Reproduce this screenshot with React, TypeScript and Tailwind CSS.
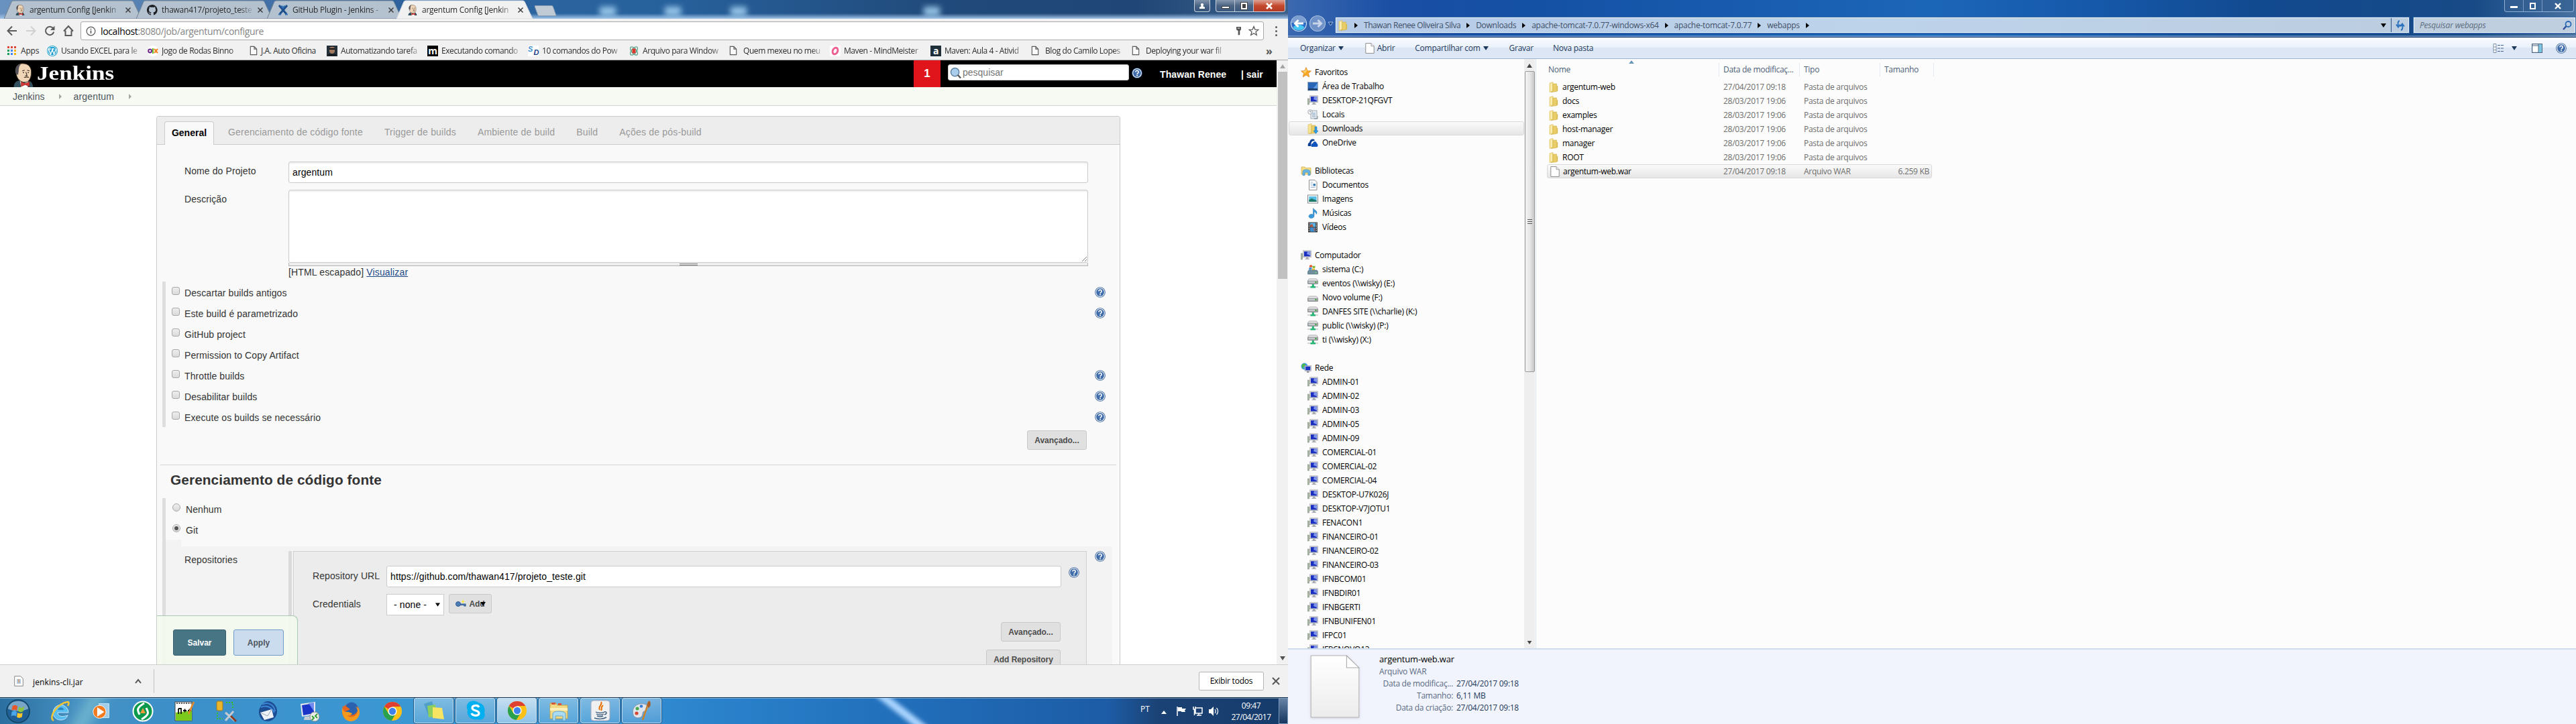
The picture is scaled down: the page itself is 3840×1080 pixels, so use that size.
import React from "react";

type Kids = { children?: React.ReactNode };

/* ---------- small shared drawings ---------- */

const Help = ({ className = "" }: { className?: string }) => (
  <svg viewBox="0 0 16 16" className={"size-4 shrink-0 " + className}>
    <circle cx="8" cy="8" r="7.8" fill="#2f5a97" />
    <circle cx="8" cy="8" r="6.9" fill="#fff" />
    <circle cx="8" cy="8" r="5.9" fill="#3f6cab" />
    <path d="M5.9 6.4a2.1 2.1 0 1 1 3.3 1.7c-.8.5-1.1.8-1.1 1.6" fill="none" stroke="#fff" strokeWidth="1.6" />
    <rect x="7.2" y="10.7" width="1.8" height="1.7" fill="#fff" />
  </svg>
);

const Butler = ({ className = "" }: { className?: string }) => (
  <svg viewBox="0 0 32 40" className={className}>
    <path d="M0 40c0-7 4-10 9-11l14 0c6 1 8 5 9 11z" fill="#33515f" />
    <path d="M10 28l6 8 8-8-1 12H12z" fill="#fff" />
    <path d="M3 15C2 5 9 0 16 1c8 0 13 6 13 14 0 10-4 17-11 17S5 26 4 18z" fill="#f0d6b7" stroke="#3b2a20" strokeWidth="1" />
    <path d="M3 17C1 8 5 2 12 2c-3 2-4 6-4 11l-1 7z" fill="#57525a" />
    <path d="M14 13l4-1M22 12l4 1M15 16h2M23 16h2M20 15l2 6h-3M17 24c3-1 6-1 8 0" fill="none" stroke="#3b2a20" strokeWidth="1.2" />
    <path d="M12 31l7 3 7-3v8l-7-3-7 3z" fill="#d33833" stroke="#7b1714" strokeWidth=".6" />
  </svg>
);

const Page = ({ className = "" }: { className?: string }) => (
  <svg viewBox="0 0 12 16" className={"h-[15px] w-3 shrink-0 " + className}>
    <path d="M1 1.5h6l4 4v9H1zM7 1.5v4h4" fill="#fafafa" stroke="#5a5a5a" strokeWidth="1.2" />
  </svg>
);

const Folder = ({ className = "" }: { className?: string }) => (
  <svg viewBox="0 0 16 16" className={"size-4 shrink-0 " + className}>
    <path d="M2 2l5-1.5V14l-5 1.5z" fill="#f6e396" stroke="#d8b84c" strokeWidth=".6" />
    <path d="M7 3h5.5v11.5L4 15.5 7 14z" fill="#e9cd69" stroke="#cfae45" strokeWidth=".6" />
    <path d="M12.5 6h1.7v8h-1.7z" fill="#d9bc55" />
    <path d="M4.5 2.5v11" stroke="#fdf3c4" strokeWidth="1.2" />
  </svg>
);

const Sheet = ({ className = "" }: { className?: string }) => (
  <svg viewBox="0 0 14 16" className={"h-4 w-3.5 shrink-0 " + className}>
    <path d="M.8.6H9l4.2 4.2v10.6H.8z" fill="#fff" stroke="#8c8c8c" strokeWidth="1" />
    <path d="M9 .6v4.2h4.2" fill="#eee" stroke="#8c8c8c" strokeWidth=".8" />
  </svg>
);

const Pc = () => (
  <svg viewBox="0 0 16 16" className="size-4 shrink-0">
    <rect x="0.3" y="5" width="2.4" height="9" fill="#a9b7a4" stroke="#7e8a7b" strokeWidth=".5" />
    <rect x="3.6" y=".8" width="12" height="10" fill="#c9ccd0" stroke="#9a9da1" strokeWidth=".5" />
    <rect x="5" y="2.2" width="9.2" height="7.2" fill="#1a2fc0" />
    <path d="M10 2.2h4.2v6L9 6z" fill="#7f95ea" />
    <path d="M8 11h3.4v1.8H13V14H6.5v-1.2H8z" fill="#a8abb0" />
  </svg>
);

const Drive = ({ net }: { net?: boolean }) => (
  <svg viewBox="0 0 16 16" className="size-4 shrink-0">
    <g transform={net ? "translate(0 0)" : "translate(0 5)"}>
      <path d="M2.5 1h11l2 2.5v5h-15v-5z" fill="#f1f1f1" stroke="#8e9194" strokeWidth=".8" />
      <rect x=".8" y="4" width="14.4" height="4" rx="1" fill="#c5c8cb" stroke="#75787b" strokeWidth=".8" />
      <rect x="11.5" y="5" width="2" height="2" fill="#2fa02a" />
    </g>
    {net && <path d="M0 13h16" stroke="#a9b0ad" />}
    {net && <path d="M6.800 9h3v3H12v2.500H4.500V12h2.300z" fill="#22b573" />}
  </svg>
);

const SysDrive = () => (
  <svg viewBox="0 0 16 16" className="size-4 shrink-0">
    <path d="M3 2c1.500-1 3-1 4 0v3C6 4 4.500 4 3 5z" fill="#e5542b" />
    <path d="M7.500 2.300c1.500 1 3 1 4 0v3c-1 1-2.500 1-4 0z" fill="#7cb82f" />
    <path d="M2.500 5.500c1.500-1 3-1 4 0v3H2z" fill="#3f8fd8" />
    <path d="M7 6c1.500 1 3 1 4 0v3H7z" fill="#f2c02e" />
    <path d="M2 9h12l1.500 2v4H.500v-4z" fill="#6f8f9f" stroke="#4a6674" strokeWidth=".6" />
    <rect x="11.500" y="12" width="2" height="1.500" fill="#7be06a" />
  </svg>
);

const Star = () => (
  <svg viewBox="0 0 16 16" className="size-4 shrink-0">
    <path d="M8 .5l2.200 5 5.300.4-4 3.600 1.300 5.500L8 12l-4.800 3 1.300-5.500-4-3.600 5.300-.4z" fill="#f9a825" stroke="#d9822b" strokeWidth=".7" />
    <path d="M8 2.500l1 3.500-3 3-3-2.500L6.500 6z" fill="#fcd873" />
  </svg>
);

const DesktopIcon = () => (
  <svg viewBox="0 0 16 16" className="size-4 shrink-0">
    <rect x=".500" y="1.500" width="15" height="12.500" fill="#2a66b8" stroke="#9aaabd" />
    <path d="M6 14L15 3v11z" fill="#5d9be0" />
    <rect x="1" y="11" width="14" height="2.500" fill="#1b3c66" />
  </svg>
);

const Recent = () => (
  <svg viewBox="0 0 16 16" className="size-4 shrink-0">
    <rect x="5" y="2" width="9" height="12" fill="#e8edf2" stroke="#8b97a3" strokeWidth=".8" />
    <path d="M7 6h5M7 8.500h5M7 11h5" stroke="#7aa0c4" />
    <circle cx="4" cy="4" r="3.300" fill="#f5f5f5" stroke="#8b97a3" strokeWidth=".8" />
    <path d="M4 2v2h1.500M10 14h5v-4" fill="none" stroke="#7b8894" />
  </svg>
);

const DownloadsIcon = () => (
  <svg viewBox="0 0 16 16" className="size-4 shrink-0">
    <path d="M1 2l5-1.500V14l-5 1.500z" fill="#f6e396" stroke="#d8b84c" strokeWidth=".6" />
    <path d="M6 3h6v11.500L3 15.500 6 14z" fill="#e9cd69" stroke="#cfae45" strokeWidth=".6" />
    <path d="M11 5h3v6h2l-3.500 4.500L9 11h2z" fill="#2f9be3" stroke="#1b6fae" strokeWidth=".5" />
  </svg>
);

const OneDrive = () => (
  <svg viewBox="0 0 16 16" className="size-4 shrink-0">
    <path d="M1 13C0 9 2 8 3 7.500 3.500 3 8 1 11 4l-1 1C6 5 5 8 5.500 13z" fill="#0a3f94" />
    <path d="M6 14c-1-3 0-5 2-5 1-4 5-4 6 0 2 1 2 5 0 5z" fill="#0f55bb" />
  </svg>
);

const Libraries = () => (
  <svg viewBox="0 0 16 16" className="size-4 shrink-0">
    <path d="M1 2h5l1 1.500h8V13H1z" fill="#f4dd86" stroke="#cfae45" strokeWidth=".7" />
    <path d="M3 14.500V9c0-2 2-3 5-3s6 1 6 3v5.500h-3V10H6v4.500z" fill="#6bb8e6" stroke="#3582b5" strokeWidth=".7" />
  </svg>
);

const DocIcon = () => (
  <svg viewBox="0 0 16 16" className="size-4 shrink-0">
    <path d="M2.500.6H11l3 3v11.800H2.500z" fill="#fff" stroke="#8a8f94" />
    <path d="M4.500 4h4M4.500 6.500h3M4.500 9h3M4.500 11.500h7" stroke="#9fb4c8" />
    <rect x="8.500" y="6" width="3.500" height="3.500" fill="#3b7fb8" />
  </svg>
);

const PictureIcon = () => (
  <svg viewBox="0 0 16 16" className="size-4 shrink-0">
    <rect x=".500" y="2" width="15" height="12" fill="#fff" stroke="#83898f" />
    <rect x="2.300" y="4" width="11.400" height="8" fill="#58bfe6" />
    <path d="M2.300 9l4-2 7.400 3v2H2.300z" fill="#1f7a6b" />
  </svg>
);

const MusicIcon = () => (
  <svg viewBox="0 0 16 16" className="size-4 shrink-0">
    <path d="M8.500.5c1 2.500 5 3 5.500 6 .2 2-1 3-1 3 .3-2-1-3-3-3.500V12c0 2-2 3.500-4.500 3.500S2 14 2 12.300 4 9.500 6 9.500c1 0 2 .3 2.500.7z" fill="#3a9bdc" stroke="#1f6fb0" strokeWidth=".5" />
  </svg>
);

const VideoIcon = () => (
  <svg viewBox="0 0 16 16" className="size-4 shrink-0">
    <rect x="1" y=".5" width="14" height="15" fill="#3a3a3a" />
    <rect x="4" y="1.500" width="8" height="6" fill="#5bb4e8" />
    <rect x="4" y="8.500" width="8" height="6" fill="#3e8ed0" />
    <path d="M4 5l3-2 2 4.500H4zM9 9l3 2-2 3z" fill="#b5523d" />
    <path d="M2.500 1.500v13M13.500 1.500v13" stroke="#e9e9e9" strokeWidth="1.200" strokeDasharray="1.300 1.300" />
  </svg>
);

const NetworkIcon = () => (
  <svg viewBox="0 0 16 16" className="size-4 shrink-0">
    <circle cx="5.500" cy="5.500" r="5" fill="#3aa0e0" />
    <path d="M2 3c2-2 5-2 5 0S4 5 3.500 8 1 6 2 3z" fill="#55b947" />
    <rect x="6" y="4.500" width="9.500" height="8" fill="#c5c9d2" stroke="#8d9199" strokeWidth=".5" />
    <rect x="7.200" y="5.700" width="7" height="5.500" fill="#1b33c4" />
    <path d="M9 12.500h3.500V15H9z" fill="#9498a0" />
  </svg>
);

const Tri = ({ className = "" }: { className?: string }) => (
  <svg viewBox="0 0 8 6" className={"h-1.5 w-2 shrink-0 " + className}>
    <path d="M0 0h8L4 6z" fill="currentColor" />
  </svg>
);

/* ---------- Chrome window ---------- */

const GitCat = () => (
  <svg viewBox="0 0 16 16" className="size-4 shrink-0">
    <path
      d="M8 0C3.580 0 0 3.580 0 8c0 3.540 2.290 6.530 5.470 7.590.4.070.55-.17.55-.38v-1.490c-2.230.48-2.700-1.070-2.700-1.070-.36-.92-.89-1.170-.89-1.170-.73-.5.060-.49.060-.49.8.060 1.230.83 1.230.83.71 1.220 1.870.87 2.330.66.070-.52.280-.87.510-1.070-1.780-.2-3.640-.89-3.640-3.950 0-.87.31-1.590.82-2.150-.08-.2-.36-1.020.08-2.120 0 0 .67-.21 2.200.82a7.600 7.600 0 0 1 4 0c1.530-1.040 2.200-.82 2.200-.82.44 1.100.16 1.920.08 2.120.51.56.82 1.270.82 2.150 0 3.070-1.870 3.750-3.650 3.950.29.25.54.73.54 1.480v2.200c0 .21.150.46.55.38A8 8 0 0 0 8 0z"
      fill="#1c1f24"
    />
  </svg>
);

const PluginX = () => (
  <svg viewBox="0 0 16 16" className="size-4 shrink-0">
    <path d="M2 1l11 13M14 1L3 14" stroke="#1d4f8c" strokeWidth="3" />
    <path d="M1 14.500h4M11 14.500h4M5.500 1.500l2.500 3 2.500-3" stroke="#2f6fb5" strokeWidth="2" fill="none" />
  </svg>
);

function ChromeTab({ icon, label, active, width }: { icon: React.ReactNode; label: string; active?: boolean; width: string }) {
  return (
    <div className={"relative -mr-[9px] flex h-7 shrink-0 items-center pt-0.5 pl-4 " + width + (active ? " z-10" : "")}>
      <svg viewBox="0 0 204 28" preserveAspectRatio="none" className="absolute inset-0 size-full">
        <path d="M0 28L11 2.500Q12 1 14 1H188Q190 1 191 2.500L203 28z" fill={active ? "#f1f1f1" : "#b4c1cf"} stroke={active ? "#cfd6de" : "#6f8194"} />
      </svg>
      <div className="relative flex items-center">
        {icon}
        <span className="ml-[6px] w-[137px] text-xs tracking-[-0.25px] whitespace-nowrap text-[#2b2b2b] [mask-image:linear-gradient(to_right,#000_85%,transparent)]">{label}</span>
        <svg viewBox="0 0 8 8" className="ml-1.5 size-2">
          <path d="M.5.5l7 7M7.500.5l-7 7" stroke="#3c3c3c" strokeWidth="1.500" />
        </svg>
      </div>
    </div>
  );
}

function ChromeTitle() {
  return (
    <div className="relative flex h-7 overflow-hidden bg-[linear-gradient(90deg,#6a92c0_0%,#2f629c_30%,#2b649f_42%,#27619c_52%,#214b7c_72%,#1f4676_88%,#3e618c_100%)] pl-[6px]">
      <div className="absolute inset-x-0 bottom-0 h-2 bg-gradient-to-b from-transparent to-[#a4c6ea]" />
      {["left-[894px]", "left-[991px]", "left-[1089px]", "left-[1377px]"].map((l) => (
        <div key={l} className={"absolute top-2.5 h-[14px] w-6 bg-[#9fcdee]/90 blur-[4px] " + l} />
      ))}
      <ChromeTab width="w-[206px]" icon={<Butler className="h-4 w-4" />} label="argentum Config [Jenkin" />
      <ChromeTab width="w-[204px]" icon={<GitCat />} label="thawan417/projeto_teste" />
      <ChromeTab width="w-[202px]" icon={<PluginX />} label="GitHub Plugin - Jenkins -" />
      <ChromeTab active width="w-[204px]" icon={<Butler className="h-4 w-4" />} label="argentum Config [Jenkin" />
      <div className="relative mt-2 ml-[13px] h-4 w-7 skew-x-[20deg] rounded-[2px] border border-[#8fa0b2] bg-[#c0cad5]" />
      <div className="absolute top-0 right-1 flex">
        <div className="mr-2 flex h-[18px] w-6 items-center justify-center rounded-b border border-t-0 border-[#c8d3e0] bg-gradient-to-b from-[#7f93ab] via-[#4a6485] to-[#35547b]">
          <svg viewBox="0 0 10 10" className="size-2.5"><path d="M5 1a2 2 0 0 1 1.500 3.500L7 6l2 .5V9H1V6.500L3 6l.5-1.500A2 2 0 0 1 5 1z" fill="#fff" /></svg>
        </div>
        <div className="flex h-[18px] overflow-hidden rounded-b border border-t-0 border-[#c8d3e0] bg-gradient-to-b from-[#8799ae] via-[#4c6484] to-[#3a587e]">
          <div className="flex w-7 items-center justify-center border-r border-[#b9c5d4] pt-1"><div className="h-1 w-3 border border-[#444] bg-white" /></div>
          <div className="flex w-7 items-center justify-center border-r border-[#b9c5d4]"><div className="h-2.5 w-[9px] border-2 border-white bg-[#444] outline outline-[#444]" /></div>
          <div className="flex w-[46px] items-center justify-center bg-gradient-to-b from-[#dca293] via-[#c44a2e] to-[#b53a25]">
            <svg viewBox="0 0 10 10" className="size-2.5"><path d="M1 1l8 8M9 1L1 9" stroke="#fff" strokeWidth="2.600" /></svg>
          </div>
        </div>
      </div>
    </div>
  );
}

function Omnibox() {
  return (
    <div className="flex h-[34px] shrink-0 items-center bg-[#f1f1f1] pt-0.5 pl-2.5">
      <svg viewBox="0 0 112 20" className="mr-[-2px] h-5 w-28" fill="none" stroke="#5a5a5a" strokeWidth="2">
        <path d="M15 10H2M8 3.500L1.500 10 8 16.500" />
        <path d="M29 10h13M36 3.500L42.500 10 36 16.500" stroke="#d0d0d0" />
        <path d="M69 6A6.200 6.200 0 1 0 70.200 11.500" />
        <path d="M71.500 2.500v6.500H65z" fill="#5a5a5a" stroke="none" />
        <path d="M85 10.500L92 3l7 7.500M87.500 9.500V17h9V9.500" />
      </svg>
      <div className="flex h-[28px] w-[1764px] items-center rounded-[3px] border border-[#a9a9a9] bg-white pr-1.5 pl-[7px]">
        <svg viewBox="0 0 16 16" className="size-[15px]" fill="none" stroke="#5a5a5a" strokeWidth="1.300">
          <circle cx="8" cy="8" r="6.800" /><path d="M8 7v4.500M8 4v1.600" strokeWidth="1.800" />
        </svg>
        <span className="ml-[7px] text-[14px] tracking-[-0.35px] text-[#858585]"><span className="text-black">localhost</span>:8080/job/argentum/configure</span>
        <svg viewBox="0 0 10 16" className="ml-auto h-3.5 w-[9px]"><path d="M1 1h8v5L7 8v7H4V8L1 6z" fill="#555" /><path d="M3 3.500h4" stroke="#fff" /></svg>
        <svg viewBox="0 0 16 16" className="ml-2.5 size-4"><path d="M8 1.500l1.900 4.600 4.900.3-3.800 3.100 1.300 4.800L8 11.700l-4.300 2.600L5 9.500 1.200 6.400l4.900-.3z" fill="none" stroke="#5a5a5a" strokeWidth="1.300" /></svg>
      </div>
      <div className="ml-[17px] flex flex-col gap-[3px]">{[0, 1, 2].map((i) => <div key={i} className="size-[3px] rounded-full bg-[#5a5a5a]" />)}</div>
    </div>
  );
}

const bookmarks: [React.ReactNode, string][] = [
  [<svg viewBox="0 0 16 16" className="size-4"><circle cx="8" cy="8" r="8" fill="#1c9dcd" /><circle cx="8" cy="8" r="6.700" fill="none" stroke="#fff" strokeWidth=".9" /><path d="M2.500 5l3 8L8 6l2.500 7 3-8M2 5h4M7 5h4" fill="none" stroke="#fff" strokeWidth="1.400" /></svg>, "Usando EXCEL para le"],
  [<svg viewBox="0 0 16 16" className="size-4"><circle cx="8" cy="8" r="8" fill="#fff" /><circle cx="3.600" cy="8" r="2.400" fill="none" stroke="#6d2a8c" strokeWidth="2" /><path d="M8 4v8" stroke="#6bbe1f" strokeWidth="2" /><path d="M10 5l5 6M15 5l-5 6" stroke="#f58220" strokeWidth="2" /></svg>, "Jogo de Rodas Binno"],
  [<Page />, "J.A. Auto Oficina"],
  [<svg viewBox="0 0 16 16" className="size-4"><rect width="16" height="16" fill="#23303a" /><path d="M4 4c1-3 7-3 8 0v5c-1 4-7 4-8 0z" fill="#a0785f" /><path d="M4 5h8M2 14h12" stroke="#111" strokeWidth="2" /></svg>, "Automatizando tarefa"],
  [<div className="flex size-4 items-center justify-center bg-black text-[14px] leading-none font-bold text-white">m</div>, "Executando comando"],
  [<div className="relative size-4 bg-white font-[Liberation_Sans] text-[11px] leading-none font-bold text-[#3d8fd1] italic">S<span className="absolute right-0 bottom-0 text-[#20408c]">D</span></div>, "10 comandos do Pow"],
  [<svg viewBox="0 0 16 16" className="size-4" fill="none" stroke="#5aa58c" strokeWidth="1.300"><ellipse cx="8" cy="8" rx="3.500" ry="7.400" transform="rotate(40 8 8)" /><ellipse cx="8" cy="8" rx="3.500" ry="7.400" transform="rotate(-40 8 8)" /><rect x="5.500" y="4.500" width="5" height="7" fill="#e0362c" stroke="none" /></svg>, "Arquivo para Window"],
  [<Page />, "Quem mexeu no meu"],
  [<svg viewBox="0 0 16 16" className="size-4"><rect width="16" height="16" rx="2" fill="#fff" /><ellipse cx="8" cy="8" rx="3.600" ry="5" fill="none" stroke="#ee5f92" strokeWidth="3" transform="rotate(25 8 8)" /></svg>, "Maven - MindMeister"],
  [<div className="flex size-4 items-center justify-center bg-[#1f2f3a] text-[14px] leading-none font-bold text-white">a</div>, "Maven: Aula 4 - Ativid"],
  [<Page />, "Blog do Camilo Lopes"],
  [<Page />, "Deploying your war fil"],
];

function Bookmarks() {
  const dots = ["#db4437", "#db4437", "#db4437", "#0f9d58", "#4285f4", "#f4b400", "#0f9d58", "#4285f4", "#f4b400"];
  return (
    <div className="flex h-[28px] shrink-0 items-center border-b border-[#a5aaa8] bg-[#f1f1f1] pl-[11px] text-xs tracking-[-0.42px] whitespace-nowrap text-[#2d2d2d]">
      <svg viewBox="0 0 13 13" className="size-[13px]">
        {dots.map((c, i) => <rect key={i} x={(i % 3) * 5} y={Math.floor(i / 3) * 5} width="3" height="3" fill={c} />)}
      </svg>
      <span className="ml-[7px] w-[39px] tracking-[-0.2px]">Apps</span>
      {bookmarks.map(([icon, label], i) => (
        <div key={i} className={"flex shrink-0 items-center " + (label === "J.A. Auto Oficina" ? "w-[117px] pl-0.5" : "w-[150px]")}>
          <div className={"flex shrink-0 " + (label === "J.A. Auto Oficina" ? "w-[17px]" : "w-[21px]")}>{icon}</div>
          <span className={label === "J.A. Auto Oficina" ? "" : "w-[120px] [mask-image:linear-gradient(to_right,#000_85%,transparent)]"}>{label}</span>
        </div>
      ))}
      <span className="ml-[50px] text-base font-bold text-[#555]">»</span>
    </div>
  );
}

function JenkinsHeader() {
  return (
    <>
      <div className="flex h-10 shrink-0 bg-black text-white">
        <Butler className="mt-1 ml-[18px] h-[36px] w-[34px]" />
        <span className="ml-[3px] w-[120px] origin-left scale-x-[1.17] font-[Liberation_Serif] text-[30px] leading-[37px] font-bold">Jenkins</span>
        <div className="ml-auto flex w-10 items-center justify-center bg-[#e0151b] text-[17px] font-bold">1</div>
        <div className="mt-1.5 ml-[11px] flex h-6 w-[270px] items-center rounded-[3px] border border-[#ccc] bg-white pl-0.5 text-[#757575] shadow-inner">
          <svg viewBox="0 0 18 18" className="size-[17px]"><circle cx="8" cy="8" r="6.500" fill="#a9cdea" stroke="#5b7e9e" strokeWidth="1.500" /><path d="M12.500 12.500l4.500 5" stroke="#555" strokeWidth="2.500" /></svg>
          <span className="ml-0.5 text-[14px]">pesquisar</span>
        </div>
        <Help className="mt-[11px] ml-1" />
        <span className="mt-[11px] ml-[26px] w-[121px] text-[14px] font-bold tracking-[0.1px]">Thawan Renee</span>
        <span className="mt-[11px] w-[53px] text-[14px] font-bold">| sair</span>
      </div>
      <div className="flex h-[28px] shrink-0 items-center border-b border-[#d3d7cf] bg-[#f6faf2] pt-px pl-[19px] text-[14px] text-[#4d545d]">
        Jenkins
        <span className="ml-[22px] border-y-4 border-l-4 border-transparent border-l-[#a5a5a5]" />
        <span className="ml-[17px] tracking-[0.2px]">argentum</span>
        <span className="ml-[22px] border-y-4 border-l-4 border-transparent border-l-[#a5a5a5]" />
      </div>
    </>
  );
}

const GrayButton = ({ children, className = "" }: Kids & { className?: string }) => (
  <div className={"flex h-[29px] items-center justify-center rounded-[3px] border border-[#c9c9c9] bg-[#e0e0e0] text-xs font-bold tracking-[-0.05px] text-[#4d4d4d] " + className}>{children}</div>
);

const checks: [string, boolean][] = [
  ["Descartar builds antigos", true],
  ["Este build é parametrizado", true],
  ["GitHub project", false],
  ["Permission to Copy Artifact", false],
  ["Throttle builds", true],
  ["Desabilitar builds", true],
  ["Execute os builds se necessário", true],
];

function ConfigPanel() {
  return (
    <div className="relative mt-[15px] ml-[233px] flex h-[818px] w-[1437px] flex-col overflow-hidden rounded-t border border-b-0 border-[#c9cbcc] bg-[#f9f9f9] text-[14px] tracking-[0.1px] text-[#333]">
      <div className="flex h-[42px] shrink-0 items-end border-b border-[#c9cbcc] bg-[#ededed] pl-[11px] text-[#999]">
        <div className="-mb-px flex h-[35px] w-[74px] items-center justify-center rounded-t border border-b-0 border-[#c9cbcc] bg-[#f9f9f9] pb-px font-bold tracking-normal text-black">General</div>
        <div className="flex h-[35px] items-center gap-8 pb-px pl-[21px] tracking-[0.19px]">
          {["Gerenciamento de código fonte", "Trigger de builds", "Ambiente de build", "Build", "Ações de pós-build"].map((t) => <span key={t}>{t}</span>)}
        </div>
      </div>
      <div className="mt-[25px] flex h-[42px] shrink-0">
        <span className="mt-1 w-[155px] pl-[41px]">Nome do Projeto</span>
        <div className="ml-[41px] flex h-8 w-[1192px] items-center rounded-[3px] border border-[#c9cbcc] bg-white pl-[5px] text-black shadow-[inset_0_2px_2px_#eee]">argentum</div>
      </div>
      <div className="flex h-[115px] shrink-0">
        <span className="mt-1 w-[155px] pl-[41px]">Descrição</span>
        <div className="ml-[41px] flex w-[1192px] flex-col">
          <div className="flex h-[109px] items-end justify-end rounded-[3px] border border-[#c9cbcc] bg-white shadow-[inset_0_2px_2px_#eee]">
            <svg viewBox="0 0 9 9" className="size-[9px]"><path d="M1 8l7-7M5 8l3-3" stroke="#777" /></svg>
          </div>
          <div className="flex h-[5px] flex-col items-center justify-center gap-px border border-t-0 border-[#b5b5b5] bg-[#eee]">
            <div className="h-px w-[27px] bg-[#888]" /><div className="h-px w-[27px] bg-[#888]" />
          </div>
        </div>
      </div>
      <div className="h-[22px] shrink-0 pl-[196px] leading-[17px] tracking-[0.15px]">[HTML escapado] <span className="text-[#204a87] underline">Visualizar</span></div>
      <div className="ml-[8px] flex h-[217px] shrink-0 flex-col border-l-[5px] border-[#dedede]">
        {checks.map(([label, help]) => (
          <div key={label} className="flex h-[31px] shrink-0 items-center pl-[9px]">
            <div className="-mt-[3px] h-3 w-[12px] rounded-[3px] border border-[#a8a8a8] bg-gradient-to-b from-[#eee] to-[#dadada]" />
            <span className="ml-[7px] pt-1">{label}</span>
            {help && <Help className="mr-[21px] ml-auto" />}
          </div>
        ))}
      </div>
      <GrayButton className="mt-[5px] ml-[1297px] w-[89px] shrink-0">Avançado...</GrayButton>
      <div className="mx-[5px] mt-[22px] h-px shrink-0 bg-[#d5d5d5]" />
      <div className="mt-[8px] ml-[20px] h-[41px] shrink-0 text-[20.8px] leading-7 font-bold">Gerenciamento de código fonte</div>
      <div className="relative ml-[8px] flex flex-1 flex-col border-l-[5px] border-[#dedede]">
        {["Nenhum", "Git"].map((t) => (
          <div key={t} className="flex h-[31px] shrink-0 items-center pl-[10px]">
            <div className="-mt-[3px] flex size-3 items-center justify-center rounded-full border border-[#a8a8a8] bg-gradient-to-b from-[#eee] to-[#dadada]">
              {t === "Git" && <div className="size-1.5 rounded-full bg-[#555]" />}
            </div>
            <span className="ml-2 pt-1">{t}</span>
          </div>
        ))}
        <div className="h-2.5 w-[23px] shrink-0 bg-[#f3f3f3]" />
        <div className="mr-[11px] flex flex-1 bg-[#f3f3f3] pt-[7px]">
          <span className="mt-[3px] w-[183px] pl-[28px]">Repositories</span>
          <div className="w-[5px] bg-[#dadada]" />
          <div className="ml-0.5 flex w-[1183px] flex-col border border-b-0 border-[#d0d0d0] bg-[#ececec]">
            <div className="mt-[21px] flex h-[42px] shrink-0">
              <span className="mt-[5px] w-[138px] pl-7">Repository URL</span>
              <div className="flex h-8 w-[1006px] items-center rounded-[3px] border border-[#c9cbcc] bg-white pl-[5px] text-black">https://github.com/thawan417/projeto_teste.git</div>
              <Help className="mt-[2px] ml-[11px]" />
            </div>
            <div className="flex h-[42px] shrink-0">
              <span className="mt-[5px] w-[138px] pl-7">Credentials</span>
              <div className="flex h-8 w-[86px] items-center border border-[#c9cbcc] bg-white pl-[10px] text-black">- none - <Tri className="mr-[5px] ml-auto w-[7px]" /></div>
              <GrayButton className="relative ml-[7px] w-16">
                <svg viewBox="0 0 16 16" className="mr-1 size-4"><circle cx="4" cy="8" r="3.500" fill="#4f7db5" stroke="#2f5a92" /><path d="M7 8h8v3h-2V9.500H7" fill="#5f8bc0" stroke="#2f5a92" strokeWidth="1.200" /><path d="M11 1l1 2.500L14.500 4 12 5l-1 2.500L10 5 8 4l2.500-.5z" fill="#f8e83a" /></svg>
                Add
                <Tri className="absolute right-2 text-black" />
              </GrayButton>
            </div>
            <GrayButton className="ml-[1054px] w-[89px] shrink-0">Avançado...</GrayButton>
            <GrayButton className="mt-3 ml-[1032px] w-[111px] shrink-0">Add Repository</GrayButton>
          </div>
          <Help className="ml-3" />
        </div>
      </div>
      <div className="absolute bottom-0 -left-px flex h-[73px] w-[211px] gap-[8px] rounded-tr-lg border border-b-0 border-[#a9c9b4] bg-[#f4f9f0]/90 pt-5 pl-6 text-xs font-bold tracking-normal">
        <div className="flex h-[39px] w-[79px] items-center justify-center rounded-[3px] border border-[#345f70] bg-[#477583] text-white">Salvar</div>
        <div className="ml-[3px] flex h-[39px] w-[75px] items-center justify-center rounded-[3px] border border-[#6f9bc8] bg-[#cbdcee] text-[#4d545d]">Apply</div>
      </div>
    </div>
  );
}

function DownloadShelf() {
  return (
    <div className="flex h-[49px] shrink-0 items-center border-t border-[#cfcfcf] bg-[#f1f1f1] text-xs">
      <svg viewBox="0 0 14 16" className="ml-[21px] h-4 w-3.5"><path d="M.7.7h9l3.600 3.600v11H.7z" fill="#fff" stroke="#888" /><rect x="4" y="5" width="6" height="7" fill="#b6c7d8" /><path d="M7 5c-2 3 2 2 0 5" stroke="#e27b2c" fill="none" /></svg>
      <span className="mt-1 ml-3.5 w-[152px] tracking-[0.12px]">jenkins-cli.jar</span>
      <svg viewBox="0 0 10 8" className="h-2 w-2.5"><path d="M1 7l4-5 4 5" fill="none" stroke="#555" strokeWidth="2" /></svg>
      <div className="ml-[18px] h-9 w-px bg-[#c4c4c4]" />
      <div className="mr-[12px] ml-auto flex h-7 w-[97px] items-center justify-center rounded-[2px] border border-[#b5b5b5] bg-white tracking-[-0.2px]">Exibir todos</div>
      <svg viewBox="0 0 12 12" className="mr-3 size-3"><path d="M1 1l10 10M11 1L1 11" stroke="#555" strokeWidth="2" /></svg>
    </div>
  );
}

/* ---------- Taskbar ---------- */

const ChromeLogo = () => (
  <svg viewBox="0 0 32 32" className="size-[30px]">
    <circle cx="16" cy="16" r="15" fill="#fbc116" />
    <path d="M16 16L3 8.500A15 15 0 0 1 29 8.500H16z" fill="#df3f31" />
    <path d="M16 16l-6 4L3 8.500A15 15 0 0 0 14.500 31L22 19z" fill="#2aa14c" />
    <circle cx="16" cy="16" r="7" fill="#fff" /><circle cx="16" cy="16" r="5.500" fill="#3f82ee" />
  </svg>
);

const pinned: React.ReactNode[] = [
  <svg viewBox="0 0 32 32" className="size-8"><path d="M6 18a11.500 11.500 0 1 1 23 0H13c0 6 7 7 15 4-3 10-21 10-22-4z" fill="#58bdf0" stroke="#dff3ff" strokeWidth=".8" /><path d="M13 14h9c0-5-8-5-9 0z" fill="#2c86c4" /><path d="M7 30C-2 25 14 3 28 2c2 0 2 3 0 6" fill="none" stroke="#f4c534" strokeWidth="2.500" /></svg>,
  <svg viewBox="0 0 32 32" className="size-7"><path d="M12 3h17v24H14z" fill="#9fcdea" stroke="#dbeefb" /><circle cx="13" cy="17" r="11" fill="#f27a1f" stroke="#fff" /><path d="M9 9l12 8-12 8z" fill="#fff" /></svg>,
  <svg viewBox="0 0 32 32" className="size-8"><circle cx="16" cy="16" r="15.500" fill="#fff" /><circle cx="16" cy="16" r="13.500" fill="#0b9a4b" /><path d="M18 4C4 12 9 16 11 21M14 28c14-8 9-12 7-17" fill="none" stroke="#fff" strokeWidth="3" /><path d="M16 11l4 8h-8z" fill="#f19a3c" /></svg>,
  <svg viewBox="0 0 32 32" className="size-8"><rect x="2" y="2" width="25" height="28" fill="#fff" stroke="#444" /><path d="M3 18l24-3v15H3z" fill="#7cc91e" /><path d="M7 20v-8M7 12h4v8M14 15h5M16.500 12.500v5M21 15h5M23.500 12.500v5" stroke="#111" strokeWidth="1.800" fill="none" /><path d="M4 4h22" stroke="#555" strokeDasharray="2 1.500" strokeWidth="2" /><path d="M30 2L22 20" stroke="#e58a2a" strokeWidth="2.500" /></svg>,
  <svg viewBox="0 0 32 32" className="size-8"><rect x="2" y="1" width="9" height="14" rx="2" fill="#e9b52c" stroke="#a97b12" /><path d="M16 3h10v10M3 18v9h8" fill="none" stroke="#37c41e" strokeWidth="1.800" strokeDasharray="2 2" /><path d="M15 30l12-14M15 18l14 12" stroke="#c4cad0" strokeWidth="3" /><path d="M23 23l8 8" stroke="#8b3b20" strokeWidth="3" /></svg>,
  <svg viewBox="0 0 32 32" className="size-8"><path d="M16 1c8 0 14 7 14 15s-6 15-14 15S2 25 3 14C6 8 8 2 16 1z" fill="#1c4d93" /><path d="M8 6c7-5 18 0 19 10M6 10c8-4 16 0 20 8" stroke="#3d86d8" strokeWidth="2" fill="none" /><path d="M5 18l17-5 3 12-14 4z" fill="#eef2f7" /><path d="M5 18l11 5 6-10" fill="none" stroke="#9aa8b8" /></svg>,
  <svg viewBox="0 0 32 32" className="size-8"><path d="M3 5l22-3v19L5 24z" fill="#e4e8ee" /><path d="M5 7l18-3v15L7 22z" fill="#1b35c9" /><path d="M15 4l8-1v13z" fill="#6f8bf0" /><path d="M9 24l10-1 3 6H8z" fill="#c9cdd4" /><circle cx="24" cy="24" r="7" fill="#e9ece9" stroke="#8a8f8a" /><path d="M20 23l3 3-3 3M28 20l-3 3 3 3" stroke="#2f9c2b" strokeWidth="1.800" fill="none" /></svg>,
  <svg viewBox="0 0 32 32" className="size-8"><circle cx="16" cy="17" r="13" fill="#e8661b" /><circle cx="17" cy="12" r="9.500" fill="#2a62b0" /><path d="M3 10c2 8 5 7 9 7l6 2c-2 4-5 4-8 3 6 5 14 2 16-5 0-4-1-6-3-8 5 2 6 5 6 9 0 7-6 13-13 13S2 25 3 10z" fill="#f39a1e" /><path d="M3 9l5-1 7 5-6 3z" fill="#e8661b" /></svg>,
  <ChromeLogo />,
];

const running: React.ReactNode[] = [
  <svg viewBox="0 0 32 32" className="size-8"><path d="M1 6l12-4 5 16-11 5z" fill="#4f9fc9" /><path d="M6 9l12-2 2 18-12 1z" fill="#8ccf5e" /><path d="M14 11l14 1 3 17-17-2z" fill="#f8e463" /></svg>,
  <svg viewBox="0 0 32 32" className="size-8"><path d="M10 2c3-1 8 0 10 2 8 2 11 9 9 15 3 7-4 13-10 10C9 31 2 24 4 15 1 9 4 3 10 2z" fill="#00aff0" /><path d="M21 11c-2-4-10-3-10 1 0 5 10 3 10 8 0 4-9 5-11 0" fill="none" stroke="#fff" strokeWidth="3.200" /></svg>,
  <ChromeLogo />,
  <svg viewBox="0 0 32 32" className="size-8"><path d="M3 5h9l2 3h15v20H3z" fill="#f2d984" stroke="#c9a646" /><path d="M5 4h6v3H5zM15 5h5v3h-5z" fill="#d35a3a" /><path d="M3 12h26v4H3z" fill="#fbeeb8" /><path d="M7 31V21c0-3 4-4 9-4s10 1 10 4v10h-4v-7H11v7z" fill="#a9dbf2" stroke="#5fa7cc" /></svg>,
  <svg viewBox="0 0 32 32" className="size-8"><rect x="2" y="1" width="28" height="30" rx="4" fill="#eef0f2" stroke="#aab" /><path d="M17 3c3 4-5 6-2 12M20 8c-4 3-1 4-3 8" stroke="#e76f00" strokeWidth="2" fill="none" /><path d="M9 18c3 2 10 2 13 0M10 21c3 2 8 2 11 0M11 24c3 1 7 1 9 0M7 27c5 2 13 2 18-1M22 18c4-1 4 3 0 4" stroke="#40607f" strokeWidth="1.500" fill="none" /></svg>,
  <svg viewBox="0 0 32 32" className="size-8"><path d="M3 22C0 12 8 4 19 6c8 2 7 10 1 11-5 0-1 6-6 9-5 2-10 0-11-4z" fill="#dfe5ec" stroke="#8897a8" /><circle cx="8" cy="20" r="2.600" fill="#d64634" /><circle cx="9" cy="13" r="2.500" fill="#47a647" /><circle cx="15" cy="9.500" r="2.300" fill="#3a7bd0" /><path d="M26 3L17 30" stroke="#c9832d" strokeWidth="2.500" /><path d="M27 1c3 4 2 8-1 11-3-3-3-7 1-11z" fill="#a9602a" /></svg>,
];

function Taskbar() {
  return (
    <div className="relative flex h-10 shrink-0 overflow-hidden border-t border-[#17344f] bg-[linear-gradient(90deg,#2a6f9f_0%,#4791c2_6%,#3d8fc8_12%,#3b97d2_30%,#3a97d4_45%,#2b83cc_55%,#2271bd_68%,#1d5ca6_86%,#1b4274_90%,#153b6b_100%)] text-white">
      <div className="absolute inset-x-0 top-0 h-px bg-white/40" />
      <div className="absolute top-[-25px] left-[1338px] h-[90px] w-[12px] -rotate-[52deg] bg-[#a9d4ff] blur-[3px]" />
      <div className="absolute top-[-30px] left-[120px] h-[100px] w-6 rotate-[30deg] bg-[#8fd0d8]/50 blur-[8px]" />
      <div className="relative ml-2 flex w-[50px] items-center">
        <svg viewBox="0 0 40 40" className="size-[38px]">
          <circle cx="20" cy="20" r="18" fill="#1f5f93" stroke="#12405f" strokeWidth="1.500" />
          <path d="M4 16C7 0 33 0 36 16c-10 5-22 5-32 0z" fill="#9fc4dc" opacity=".7" />
          <path d="M11 12c3-2 5-2 8 0l-1 7c-3-2-5-2-8 0z" fill="#e8562a" /><path d="M21 13c3 2 6 2 9-1l-2 8c-3 2-5 2-8 0z" fill="#8cc43c" />
          <path d="M10 21c3-2 5-2 8 0l-1 7c-3-2-6-2-8 0z" fill="#49a6e8" /><path d="M19 22c3 2 6 2 8 0l-1 7c-3 2-6 2-8 0z" fill="#fcc62c" />
        </svg>
      </div>
      <div className="relative flex">
        {pinned.map((p, i) => <div key={i} className="flex w-[62px] items-center justify-center">{p}</div>)}
      </div>
      <div className="relative ml-px flex gap-[3px]">
        {running.map((p, i) => (
          <div key={i} className={"flex h-[38px] w-[59px] items-center justify-center rounded-[3px] border border-[#d5e8f5]/80 outline outline-[#15406b]/70 " + (i === 2 ? "bg-gradient-to-b from-[#c5def0] to-[#8fc4e8]" : "bg-gradient-to-b from-white/35 to-white/15")}>{p}</div>
        ))}
      </div>
      <div className="relative ml-auto flex items-center text-xs">
        <span className="-mt-1.5 w-[31px]">PT</span>
        <svg viewBox="0 0 8 5" className="mt-1 mr-3.5 h-[5px] w-2"><path d="M4 0l4 5H0z" fill="#fff" /></svg>
        <svg viewBox="0 0 16 16" className="mr-2 size-4"><path d="M2 1v14" stroke="#fff" strokeWidth="1.500" /><path d="M3 2h6v2h6l-2 3 1 2H8V8H3z" fill="#fff" /></svg>
        <svg viewBox="0 0 16 16" className="mr-2 size-4"><path d="M5 3h10v8H5zM7 14h7M10 11v3M2 1v4h3V1M3.500 5v9" fill="none" stroke="#fff" strokeWidth="1.500" /></svg>
        <svg viewBox="0 0 16 16" className="mr-[18px] size-4"><path d="M1 5h3l4-4v14l-4-4H1z" fill="#fff" /><path d="M10 5c1.500 2 1.500 4 0 6M12.500 3c2.500 3 2.500 7 0 10" fill="none" stroke="#fff" strokeWidth="1.200" /></svg>
        <div className="mr-[11px] w-[60px] text-center leading-[17px] tracking-[-0.45px]">09:47<br />27/04/2017</div>
        <div className="h-full w-3.5 border border-[#7f9cbd] bg-gradient-to-b from-[#6784a6] to-[#15365f]" />
      </div>
    </div>
  );
}

function ChromeScreen() {
  return (
    <div className="flex h-[1080px] w-[1920px] shrink-0 flex-col overflow-hidden bg-white">
      <ChromeTitle />
      <Omnibox />
      <Bookmarks />
      <div className="flex h-[901px] shrink-0 overflow-hidden">
        <div className="flex w-[1903px] shrink-0 flex-col overflow-hidden bg-white font-[Liberation_Sans]">
          <JenkinsHeader />
          <ConfigPanel />
        </div>
        <div className="flex flex-1 flex-col items-center bg-[#f1f1f1] py-1.5 text-[#505050]">
          <Tri className="rotate-180 text-[#a3a3a3]" />
          <div className="mt-[5px] ml-px h-[309px] w-3.5 bg-[#c1c1c1]" />
          <Tri className="mt-auto" />
        </div>
      </div>
      <DownloadShelf />
      <Taskbar />
    </div>
  );
}

/* ---------- Explorer window ---------- */

const Chevron = () => <span className="mx-[9px] border-y-4 border-l-[5px] border-transparent border-l-black" />;

function ExplorerTop() {
  return (
    <div className="relative flex h-14 shrink-0 items-end border-b border-[#12305e] bg-[linear-gradient(90deg,#3c69b0_0%,#1a4fa5_8%,#1450a4_18%,#1c66b8_50%,#1659ab_62%,#124a90_75%,#174a86_92%,#48719f_100%)] pb-[6px] pl-[3px] shadow-[inset_0_-2px_0_#a9c8ea80]">
      <svg viewBox="0 0 70 26" className="mb-px h-[26px] w-[70px]">
        <circle cx="13" cy="13" r="11.500" fill="#2a6cc8" stroke="#cfe0f2" strokeWidth="1.200" />
        <path d="M2 12a11 11 0 0 1 22 0z" fill="#7d9fd2" /><ellipse cx="13" cy="19" rx="8" ry="4" fill="#46c8f2" />
        <path d="M20 13H8M12.500 8l-5 5 5 5" stroke="#fff" strokeWidth="3" fill="none" />
        <circle cx="41" cy="13" r="11.500" fill="#6f93c9" stroke="#a9c0df" strokeWidth="1.200" />
        <path d="M34 13h12M41.500 8l5 5-5 5" stroke="#c9d6ea" strokeWidth="3" fill="none" />
        <path d="M57 11h7l-3.500 5z" fill="#1c3f78" stroke="#9ec0ea" />
      </svg>
      <div className="-ml-[2px] flex h-[23px] w-[1600px] items-center border border-[#e9f3fb] bg-[linear-gradient(90deg,#b5cbe8,#bdd3ea_50%,#bccde0)] pl-0.5 text-xs tracking-[-0.28px] whitespace-nowrap text-[#3f4f66] outline outline-[#3a6aa8]">
        <Folder />
        <Chevron />
        <span className="tracking-[-0.45px]">Thawan Renee Oliveira Silva</span><Chevron />
        <span>Downloads</span><Chevron />
        <span>apache-tomcat-7.0.77-windows-x64</span><Chevron />
        <span>apache-tomcat-7.0.77</span><Chevron />
        <span>webapps</span><Chevron />
        <Tri className="mr-[7px] ml-auto text-black" />
        <div className="flex h-full w-[26px] items-center justify-center border-l border-[#2d5486]">
          <svg viewBox="0 0 16 16" className="size-4"><path d="M7 1C3 2 5 6 5 9M2 6.500l3 4 3-4M9 15c4-1 2-5 2-8M8 9.500l3-4 3 4" fill="none" stroke="#2d74be" strokeWidth="2" /></svg>
        </div>
      </div>
      <div className="ml-[7px] flex h-[23px] w-[241px] items-center justify-between border border-[#e9f3fb] bg-[#c0cfdf] pr-1 pl-2 text-xs tracking-[-0.2px] text-[#5c6d80] italic outline outline-[#3a6aa8]">
        Pesquisar webapps
        <svg viewBox="0 0 14 14" className="size-3.5"><circle cx="8.500" cy="5" r="4" fill="none" stroke="#2a6bb5" strokeWidth="1.800" /><path d="M5.500 8L1 13" stroke="#2a4f9b" strokeWidth="2.400" /></svg>
      </div>
      <div className="absolute top-0 right-[3px] flex h-[18px] rounded-b border border-t-0 border-[#8fb0d4] bg-[#355f93]/70">
        <div className="flex w-7 items-center justify-center border-r border-[#7a9cc4] pt-1"><div className="h-[3px] w-[11px] bg-white" /></div>
        <div className="flex w-7 items-center justify-center border-r border-[#7a9cc4]"><div className="h-2.5 w-[9px] border-2 border-white" /></div>
        <div className="flex w-[46px] items-center justify-center"><svg viewBox="0 0 10 10" className="size-2.5"><path d="M1 1l8 8M9 1L1 9" stroke="#fff" strokeWidth="2.400" /></svg></div>
      </div>
    </div>
  );
}

function ExplorerToolbar() {
  return (
    <div className="flex h-[32px] shrink-0 items-center border-b border-[#9fb3cf] bg-[linear-gradient(#fbfdff,#e9f1fb_48%,#dce6f4_50%,#dde7f5)] pl-[18px] text-xs tracking-[-0.25px] text-[#1e395b]">
      <span>Organizar</span><Tri className="ml-1" />
      <Sheet className="ml-8" /><span className="ml-1">Abrir</span>
      <span className="ml-[30px]">Compartilhar com</span><Tri className="ml-1" />
      <span className="ml-[31px]">Gravar</span>
      <span className="ml-[29px]">Nova pasta</span>
      <svg viewBox="0 0 17 14" className="mr-[11px] ml-auto h-3.5 w-[17px]"><path d="M1 .5h4v13H1zM1 5h4M1 9.500h4" fill="#fff" stroke="#7b8ea8" /><path d="M7 2.500h9M7 7h9M7 11.500h9" stroke="#41638f" strokeDasharray="4 1" /></svg>
      <Tri />
      <svg viewBox="0 0 16 14" className="mr-5 ml-[22px] h-3.5 w-4"><rect x=".6" y=".6" width="14.800" height="12.800" fill="#fff" stroke="#4c6584" strokeWidth="1.200" /><path d="M10 1h5v12h-5z" fill="#7cc6e2" /><path d="M1 3h9M10 1v12" stroke="#4c6584" /></svg>
      <Help className="mr-3.5" />
    </div>
  );
}

function NavItem({ icon, label, root, selected }: { icon: React.ReactNode; label: string; root?: boolean; selected?: boolean }) {
  return (
    <div className={"flex h-[21px] shrink-0 items-center " + (root ? "pl-[19px]" : "pl-[29px]") + (selected ? " relative before:absolute before:inset-0 before:left-px before:rounded-[3px] before:border before:border-[#d9d9d9] before:bg-gradient-to-b before:from-[#fafafa] before:to-[#e6e6e6]" : "")}>
      <div className="relative flex w-[21px] shrink-0">{icon}</div>
      <span className={"relative " + (root ? "" : "ml-px")}>{label}</span>
    </div>
  );
}

const hosts = ["ADMIN-01", "ADMIN-02", "ADMIN-03", "ADMIN-05", "ADMIN-09", "COMERCIAL-01", "COMERCIAL-02", "COMERCIAL-04", "DESKTOP-U7K026J", "DESKTOP-V7JOTU1", "FENACON1", "FINANCEIRO-01", "FINANCEIRO-02", "FINANCEIRO-03", "IFNBCOM01", "IFNBDIR01", "IFNBGERTI", "IFNBUNIFEN01", "IFPC01", "IFPCNOVO13"];

function NavPane() {
  return (
    <div className="flex w-[352px] shrink-0 flex-col overflow-hidden pt-[9px] text-xs tracking-[-0.25px] whitespace-nowrap text-black">
      <NavItem root icon={<Star />} label="Favoritos" />
      <NavItem icon={<DesktopIcon />} label="Área de Trabalho" />
      <NavItem icon={<Pc />} label="DESKTOP-21QFGVT" />
      <NavItem icon={<Recent />} label="Locais" />
      <NavItem selected icon={<DownloadsIcon />} label="Downloads" />
      <NavItem icon={<OneDrive />} label="OneDrive" />
      <div className="h-[21px] shrink-0" />
      <NavItem root icon={<Libraries />} label="Bibliotecas" />
      <NavItem icon={<DocIcon />} label="Documentos" />
      <NavItem icon={<PictureIcon />} label="Imagens" />
      <NavItem icon={<MusicIcon />} label="Músicas" />
      <NavItem icon={<VideoIcon />} label="Vídeos" />
      <div className="h-[21px] shrink-0" />
      <NavItem root icon={<Pc />} label="Computador" />
      <NavItem icon={<SysDrive />} label="sistema (C:)" />
      <NavItem icon={<Drive net />} label="eventos (\\wisky) (E:)" />
      <NavItem icon={<Drive />} label="Novo volume (F:)" />
      <NavItem icon={<Drive net />} label="DANFES SITE (\\charlie) (K:)" />
      <NavItem icon={<Drive net />} label="public (\\wisky) (P:)" />
      <NavItem icon={<Drive net />} label="ti (\\wisky) (X:)" />
      <div className="h-[21px] shrink-0" />
      <NavItem root icon={<NetworkIcon />} label="Rede" />
      {hosts.map((h) => <NavItem key={h} icon={<Pc />} label={h} />)}
    </div>
  );
}

const files = [
  ["argentum-web", "27/04/2017 09:18"],
  ["docs", "28/03/2017 19:06"],
  ["examples", "28/03/2017 19:06"],
  ["host-manager", "28/03/2017 19:06"],
  ["manager", "28/03/2017 19:06"],
  ["ROOT", "28/03/2017 19:06"],
];

function FileList() {
  return (
    <div className="flex flex-1 flex-col border-l border-[#d6e5f5] bg-[#fcfcfc] text-xs tracking-[-0.28px] whitespace-nowrap text-[#6d6d6d]">
      <div className="relative flex h-[31px] items-center text-[#4c607a]">
        <svg viewBox="0 0 8 5" className="absolute top-0.5 left-[138px] h-[5px] w-2"><path d="M4 0l4 5H0z" fill="#6b98b8" /></svg>
        <div className="flex h-5 w-[273px] items-center border-r border-[#e2ebf5] pl-[18px] leading-none">Nome</div>
        <div className="flex h-5 w-[120px] items-center border-r border-[#e2ebf5] pl-1.5 leading-none">Data de modificaç...</div>
        <div className="flex h-5 w-[120px] items-center border-r border-[#e2ebf5] pl-1.5 leading-none">Tipo</div>
        <div className="flex h-5 w-[80px] items-center border-r border-[#e2ebf5] pl-1.5 leading-none">Tamanho</div>
      </div>
      {files.map(([n, d]) => (
        <div key={n} className="flex h-[21px] items-center pl-[18px]">
          <Folder /><span className="w-[245px] pl-[5px] text-black">{n}</span>
          <span className="w-[120px]">{d}</span><span>Pasta de arquivos</span>
        </div>
      ))}
      <div className="ml-4 flex h-[21px] w-[574px] items-center rounded-[3px] border border-[#d9d9d9] bg-gradient-to-b from-[#fafafa] to-[#e6e6e6] pr-[3px] pl-1">
        <Sheet /><span className="w-[244px] shrink-0 pl-[5px] text-black">argentum-web.war</span>
        <span className="w-[120px]">27/04/2017 09:18</span><span>Arquivo WAR</span><span className="ml-auto">6.259 KB</span>
      </div>
    </div>
  );
}

function Explorer() {
  return (
    <div className="flex h-[1080px] w-[1920px] shrink-0 flex-col overflow-hidden bg-[#fcfcfc]">
      <ExplorerTop />
      <ExplorerToolbar />
      <div className="flex h-[879px] shrink-0 overflow-hidden">
        <NavPane />
        <div className="mr-[1px] flex w-4 shrink-0 flex-col items-center bg-[#eee] pt-[7px] pb-1.5">
          <Tri className="rotate-180 text-[#444]" />
          <div className="mt-[5px] flex h-[449px] w-[15px] shrink-0 flex-col items-center justify-center gap-0.5 rounded-[2px] border border-[#989898] bg-[linear-gradient(90deg,#f4f4f4,#e6e6e6_50%,#c8c8c8)]">
            {[0, 1, 2].map((i) => <div key={i} className="h-px w-[7px] bg-[#555]" />)}
          </div>
          <Tri className="mt-auto h-[5px] text-[#444]" />
        </div>
        <FileList />
      </div>
      <div className="flex flex-1 border-t-2 border-[#cfdcec] bg-[#f1f4fc] text-xs tracking-[-0.2px] text-[#5a6a84]">
        <svg viewBox="0 0 72 92" className="mt-[8px] ml-[33px] h-[94px] w-[74px] drop-shadow">
          <defs><linearGradient id="paper" x1="0" y1="0" x2="0" y2="1"><stop offset="0" stopColor="#fff" /><stop offset="1" stopColor="#ececec" /></linearGradient></defs>
          <path d="M1 1h52l18 18v72H1z" fill="url(#paper)" stroke="#b4b4b4" />
          <path d="M53 1v17.500h18z" fill="#fff" stroke="#a8a8a8" />
        </svg>
        <div className="ml-[29px] pt-[5px]">
          <div className="text-[13px] leading-[19px] text-black">argentum-web.war</div>
          <div className="leading-[18px]">Arquivo WAR</div>
          <div className="grid grid-cols-[110px_auto] gap-x-[5px] leading-[18px] tracking-[-0.28px]">
            <span className="text-right">Data de modificaç...</span><span className="text-[#1e395b]">27/04/2017 09:18</span>
            <span className="text-right">Tamanho:</span><span className="text-[#1e395b]">6,11 MB</span>
            <span className="text-right">Data da criação:</span><span className="text-[#1e395b]">27/04/2017 09:18</span>
          </div>
        </div>
      </div>
    </div>
  );
}

export default function App() {
  return (
    <div className="flex h-[1080px] w-[3840px] overflow-hidden font-['Open_Sans','Noto_Sans',sans-serif]">
      <ChromeScreen />
      <Explorer />
    </div>
  );
}
